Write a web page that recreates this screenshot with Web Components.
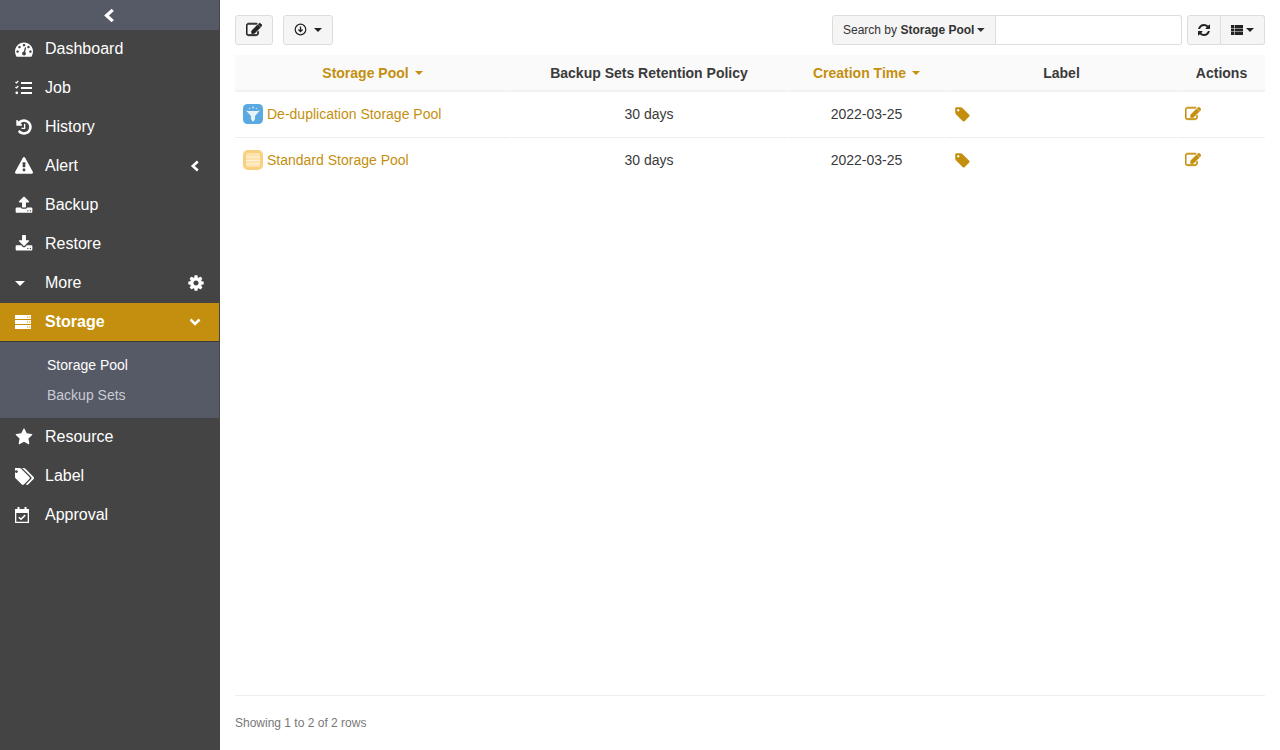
<!DOCTYPE html>
<html>
<head>
<meta charset="utf-8">
<title>Storage Pool</title>
<style>
html, body { height: 100%; margin: 0; }
body { font-family: "Liberation Sans", Arial, sans-serif; color: #333; overflow: hidden; }
app-shell { height: 750px; }
</style>
</head>
<body>
<app-shell>
    <side-nav slot="nav">
        <nav-item icon="dashboard">Dashboard</nav-item>
        <nav-item icon="tasks">Job</nav-item>
        <nav-item icon="history">History</nav-item>
        <nav-item icon="warning" after="left">Alert</nav-item>
        <nav-item icon="upload">Backup</nav-item>
        <nav-item icon="download">Restore</nav-item>
        <nav-item icon="caret" after="cog">More</nav-item>
        <nav-item icon="server" after="down" active>Storage</nav-item>
        <sub-menu>
            <sub-item current>Storage Pool</sub-item>
            <sub-item>Backup Sets</sub-item>
        </sub-menu>
        <nav-item icon="star">Resource</nav-item>
        <nav-item icon="tags">Label</nav-item>
        <nav-item icon="approval">Approval</nav-item>
    </side-nav>
    <pool-page></pool-page>
</app-shell>

<script>
const FA = (d, size, color, bold) => `<svg width="${size}" height="${size}" viewBox="0 0 1792 1792" fill="${color || 'currentColor'}"${bold ? ` stroke="${color || 'currentColor'}" stroke-width="${bold}"` : ''}><path d="${d}"/></svg>`;

const PATHS = {
    // box and pencil without the inner slots, the small size renders them solid
    edit: 'M1408 1058v190q0 119-84.5 203.5t-203.5 84.5h-832q-119 0-203.5-84.5t-84.5-203.5v-832q0-119 84.5-203.5t203.5-84.5h832q63 0 117 25 15 7 18 23 3 17-9 29l-49 49q-14 14-32 8-23-6-45-6h-832q-66 0-113 47t-47 113v832q0 66 47 113t113 47h832q66 0 113-47t47-113v-126q0-13 9-22l64-64q15-15 35-7t20 29zM1312 320l288 288-672 672h-288v-288zM1756 452l-92 92-288-288 92-92q28-28 68-28t68 28l152 152q28 28 28 68t-28 68z',
    tag: 'M576 448q0-53-37.5-90.5t-90.5-37.5-90.5 37.5-37.5 90.5 37.5 90.5 90.5 37.5 90.5-37.5 37.5-90.5zm1067 576q0 53-37 90l-491 492q-39 37-91 37-53 0-90-37l-715-716q-38-37-64.5-101t-26.5-117v-416q0-52 38-90t90-38h416q53 0 117 26.5t102 64.5l715 714q37 39 37 91z',
    tags: 'M384 448q0-53-37.5-90.5t-90.5-37.5-90.5 37.5-37.5 90.5 37.5 90.5 90.5 37.5 90.5-37.5 37.5-90.5zm1067 576q0 53-37 90l-491 492q-39 37-91 37-53 0-90-37l-715-716q-38-37-64.5-101t-26.5-117v-416q0-52 38-90t90-38h416q53 0 117 26.5t102 64.5l715 714q37 39 37 91zm384 0q0 53-37 90l-491 492q-38 37-91 37-36 0-59-14t-53-45l470-470q37-37 37-90 0-52-37-91l-715-714q-38-38-102-64.5t-117-26.5h224q53 0 117 26.5t102 64.5l715 714q37 39 37 91z',
    star: 'M1728 647q0 22-26 48l-363 354 86 500q1 7 1 20 0 21-10.5 35.5t-30.5 14.5q-19 0-40-12l-449-236-449 236q-22 12-40 12-21 0-31.5-14.5t-10.5-35.5q0-6 2-20l86-500-364-354q-25-27-25-48 0-37 56-46l502-73 225-455q19-41 49-41t49 41l225 455 502 73q56 9 56 46z',
    cog: 'M1152 896q0-106-75-181t-181-75-181 75-75 181 75 181 181 75 181-75 75-181zm512-109v222q0 12-8 23t-20 13l-185 28q-19 54-39 91 35 50 107 138 10 12 10 25t-9 23q-27 37-99 108t-94 71q-12 0-26-9l-138-108q-44 23-91 38-16 136-29 186-7 28-36 28h-222q-14 0-24.5-8.5t-11.5-21.5l-28-184q-49-16-90-37l-141 107q-10 9-25 9-14 0-25-11-126-114-165-168-7-10-7-23 0-12 8-23 15-21 51-66.5t54-70.5q-27-50-41-99l-183-27q-13-2-21-12.5t-8-23.5v-222q0-12 8-23t19-13l186-28q14-46 39-92-40-57-107-138-10-12-10-24 0-10 9-23 26-36 98.5-107.5t94.5-71.5q13 0 26 10l138 107q44-23 91-38 16-136 29-186 7-28 36-28h222q14 0 24.5 8.5t11.5 21.5l28 184q49 16 90 37l142-107q9-9 24-9 13 0 25 10 129 119 165 170 7 8 7 22 0 12-8 23-15 21-51 66.5t-54 70.5q26 50 41 98l183 28q13 2 21 12.5t8 23.5z',
    refresh: 'M1639 1056q0 5-1 7-64 268-268 434.5t-478 166.5q-146 0-282.5-55t-243.5-157l-129 129q-19 19-45 19t-45-19-19-45v-448q0-26 19-45t45-19h448q26 0 45 19t19 45-19 45l-137 137q71 66 161 102t187 36q134 0 250-65t186-179q11-17 53-117 8-23 30-23h192q13 0 22.5 9.5t9.5 22.5zm25-800v448q0 26-19 45t-45 19h-448q-26 0-45-19t-19-45 19-45l138-138q-148-137-349-137-134 0-250 65t-186 179q-11 17-53 117-8 23-30 23h-199q-13 0-22.5-9.5t-9.5-22.5v-7q65-268 270-434.5t480-166.5q146 0 284 55.5t245 156.5l130-129q19-19 45-19t45 19 19 45z',
    history: 'M1664 896q0 156-61 298t-164 245-245 164-298 61q-172 0-327-72.5t-264-204.5q-7-10-6.5-22.5t8.5-20.5l137-138q10-9 25-9 16 2 23 12 73 95 179 147t225 52q104 0 198.5-40.5t163.5-109.5 109.5-163.5 40.5-198.5-40.5-198.5-109.5-163.5-163.5-109.5-198.5-40.5q-98 0-188 35.5t-160 101.5l137 138q31 30 14 69-17 40-59 40h-448q-26 0-45-19t-19-45v-448q0-42 40-59 39-17 69 14l130 129q107-101 244.5-156.5t284.5-55.5q156 0 298 61t245 164 164 245 61 298zm-640-288v448q0 14-9 23t-23 9h-320q-14 0-23-9t-9-23v-64q0-14 9-23t23-9h224v-352q0-14 9-23t23-9h64q14 0 23 9t9 23z',
    warning: 'M1024 1375v-190q0-14-9.5-23.5t-22.5-9.5h-192q-13 0-22.5 9.5t-9.5 23.5v190q0 14 9.5 23.5t22.5 9.5h192q13 0 22.5-9.5t9.5-23.5zm-2-374l18-459q0-12-10-19-13-11-24-11h-220q-11 0-24 11-10 7-10 21l17 457q0 10 10 16.5t24 6.5h185q14 0 23.5-6.5t10.5-16.5zm-14-934l768 1408q35 63-2 126-17 29-46.5 46t-63.5 17h-1536q-34 0-63.5-17t-46.5-46q-37-63-2-126l768-1408q17-31 47-49t65-18 65 18 47 49z',
    dashboard: 'M384 1152q0-53-37.5-90.5t-90.5-37.5-90.5 37.5-37.5 90.5 37.5 90.5 90.5 37.5 90.5-37.5 37.5-90.5zm192-448q0-53-37.5-90.5t-90.5-37.5-90.5 37.5-37.5 90.5 37.5 90.5 90.5 37.5 90.5-37.5 37.5-90.5zm428 481l101-382q6-26-7.5-48.5t-38.5-29.5-48 6.5-30 39.5l-101 382q-60 5-107 43.5t-63 98.5q-20 77 20 146t117 89 146-20 89-117q16-60-6-117t-72-91zm660-33q0-53-37.5-90.5t-90.5-37.5-90.5 37.5-37.5 90.5 37.5 90.5 90.5 37.5 90.5-37.5 37.5-90.5zm-640-640q0-53-37.5-90.5t-90.5-37.5-90.5 37.5-37.5 90.5 37.5 90.5 90.5 37.5 90.5-37.5 37.5-90.5zm448 192q0-53-37.5-90.5t-90.5-37.5-90.5 37.5-37.5 90.5 37.5 90.5 90.5 37.5 90.5-37.5 37.5-90.5zm320 448q0 261-141 483-19 29-54 29h-1402q-35 0-54-29-141-221-141-483 0-182 71-348t191-286 286-191 348-71 348 71 286 191 191 286 71 348z',
    upload: 'M1344 1472q0-26-19-45t-45-19-45 19-19 45 19 45 45 19 45-19 19-45zm256 0q0-26-19-45t-45-19-45 19-19 45 19 45 45 19 45-19 19-45zm128-224v320q0 40-28 68t-68 28h-1472q-40 0-68-28t-28-68v-320q0-40 28-68t68-28h427q21 56 70.5 92t110.5 36h256q61 0 110.5-36t70.5-92h427q40 0 68 28t28 68zm-325-648q-17 40-59 40h-256v448q0 26-19 45t-45 19h-256q-26 0-45-19t-19-45v-448h-256q-42 0-59-40-17-39 14-69l448-448q18-19 45-19t45 19l448 448q31 30 14 69z',
    download: 'M1344 1344q0-26-19-45t-45-19-45 19-19 45 19 45 45 19 45-19 19-45zm256 0q0-26-19-45t-45-19-45 19-19 45 19 45 45 19 45-19 19-45zm128-224v320q0 40-28 68t-68 28h-1472q-40 0-68-28t-28-68v-320q0-40 28-68t68-28h465l135 136q58 56 136 56t136-56l136-136h464q40 0 68 28t28 68zm-325-569q17 41-14 70l-448 448q-18 19-45 19t-45-19l-448-448q-31-29-14-70 17-39 59-39h256v-448q0-26 19-45t45-19h256q26 0 45 19t19 45v448h256q42 0 59 39z'
};

// icons that are simple enough to draw by hand
const ICONS = {
    tasks: size => `<svg width="${size}" height="${size}" viewBox="0 0 18 18" fill="currentColor">
        <path d="M0.500 3l1 1 1.800-2" fill="none" stroke="currentColor" stroke-width="1.200"/>
        <path d="M0.500 8l1 1 1.800-2" fill="none" stroke="currentColor" stroke-width="1.200"/>
        <circle cx="1.800" cy="13.800" r="1.400"/>
        <rect x="6" y="3" width="11" height="2"/><rect x="6" y="8" width="11" height="2"/><rect x="6" y="13" width="11" height="2"/></svg>`,
    caret: size => `<svg width="${size}" height="${size}" viewBox="0 0 18 18" fill="currentColor"><path d="M0 7h10l-5 5z"/></svg>`,
    server: size => `<svg width="${size}" height="${size}" viewBox="0 0 18 18" fill="currentColor">
        <path fill-rule="evenodd" d="M0 2h16v4H0zM12 3.500h1v1h-1zM14.200 3.500h1v1h-1zM0 7h16v4H0zM12 8.500h1v1h-1zM14.200 8.500h1v1h-1zM0 12h16v4H0zM12 13.500h1v1h-1zM14.200 13.500h1v1h-1z"/></svg>`,
    approval: size => `<svg width="${size}" height="${size}" viewBox="0 0 18 18" fill="currentColor">
        <path fill-rule="evenodd" d="M0 3h2.500V1h2v2h5V1h2v2H14v14H0zM1.300 7v8.700h11.400V7z"/>
        <path d="M3.800 11.300l2.200 2 4.200-4.200" fill="none" stroke="currentColor" stroke-width="1.500"/></svg>`,
    tags: () => `<svg width="20" height="17" viewBox="128 128 1792 1523" fill="currentColor"><path d="${PATHS.tags}"/></svg>`
};

function icon(name, size) {
    if (ICONS[name]) return ICONS[name](size);
    return FA(PATHS[name], size);
}

const chevron = (dir, size) => {
    const pts = dir == 'left' ? '7.800,1.500 2.800,6 7.800,10.500' : '0.500,3.500 5,8 9.500,3.500';
    return `<svg width="${size || 12}" height="${size || 12}" viewBox="0 0 12 12" fill="none" stroke="currentColor" stroke-width="2.600"><polyline points="${pts}"/></svg>`;
};

class AppShell extends HTMLElement {
    constructor() {
        super();
        this.attachShadow({ mode: 'open' });
        this.shadowRoot.innerHTML = `
            <style>
            :host { display: flex; width: 1280px; }
            .nav { display: block; flex: 0 0 220px; }
            .main { display: block; flex: 1; min-width: 0; }
            </style>
            <div class="nav"><slot name="nav"></slot></div>
            <div class="main"><slot></slot></div>`;
    }
}

class SideNav extends HTMLElement {
    constructor() {
        super();
        this.attachShadow({ mode: 'open' });
        this.shadowRoot.innerHTML = `
            <style>
            :host {
                background: #444;
                border-right: 1px solid #444;
                box-sizing: border-box;
                color: #fff;
                display: block;
                height: 750px;
                width: 220px;
            }
            .collapse {
                align-items: center;
                background: #565966;
                display: flex;
                height: 30px;
                justify-content: center;
                padding-left: 1px;
            }
            </style>
            <div class="collapse">${chevron('left', 15)}</div>
            <slot></slot>`;
    }
}

class NavItem extends HTMLElement {
    constructor() {
        super();
        this.attachShadow({ mode: 'open' });
        let after = this.getAttribute('after');
        let afterHtml = '';
        if (after == 'cog') afterHtml = FA(PATHS.cog, 18);
        else if (after) afterHtml = chevron(after);
        this.shadowRoot.innerHTML = `
            <style>
            :host {
                align-items: center;
                box-sizing: border-box;
                display: flex;
                font-size: 16px;
                height: 39px;
                padding-bottom: 1px;
            }
            :host([active]) {
                background: #c48f0e;
                border-bottom: 1px solid #3a3a3a;
                font-weight: bold;
            }
            .icon { display: flex; margin-left: 15px; width: 30px; }
            .label { flex: 1; }
            .after { display: flex; justify-content: center; margin-right: 14px; width: 18px; }
            </style>
            <span class="icon">${icon(this.getAttribute('icon'), 18)}</span>
            <span class="label"><slot></slot></span>
            <span class="after">${afterHtml}</span>`;
    }
}

class SubMenu extends HTMLElement {
    constructor() {
        super();
        this.attachShadow({ mode: 'open' });
        this.shadowRoot.innerHTML = `
            <style>
            :host {
                background: #565966;
                box-sizing: border-box;
                display: block;
                height: 76px;
                padding-top: 8px;
            }
            </style>
            <slot></slot>`;
    }
}

class SubItem extends HTMLElement {
    constructor() {
        super();
        this.attachShadow({ mode: 'open' });
        this.shadowRoot.innerHTML = `
            <style>
            :host {
                align-items: center;
                color: #c8ccd4;
                display: flex;
                font-size: 14px;
                height: 30px;
                padding-left: 47px;
            }
            :host([current]) { color: #fff; }
            </style>
            <slot></slot>`;
    }
}

class ToolButton extends HTMLElement {
    constructor() {
        super();
        this.attachShadow({ mode: 'open' });
        this.shadowRoot.innerHTML = `
            <style>
            :host {
                align-items: center;
                background: #f5f5f5;
                border: 1px solid #ddd;
                border-radius: 3px;
                box-sizing: border-box;
                color: #333;
                display: inline-flex;
                font-size: 12px;
                gap: 7px;
                height: 30px;
                justify-content: center;
            }
            </style>
            <slot></slot>`;
    }
}

class PoolRow extends HTMLElement {
    constructor() {
        super();
        this.attachShadow({ mode: 'open' });
        this.shadowRoot.innerHTML = `
            <style>
            :host { display: contents; }
            .cell {
                align-items: center;
                border-bottom: 1px solid #eee;
                box-sizing: border-box;
                color: #3a3a3a;
                display: flex;
                font-size: 14px;
                height: 46px;
                margin-right: 1px;
                padding-bottom: 1px;
            }
            :host(:last-child) .cell { border-bottom-color: transparent; }
            .cell:last-child { margin-right: 0; }
            .center { justify-content: center; }
            .name { color: #c48f0e; gap: 4px; padding-left: 8px; }
            .tag { color: #c48f0e; padding-left: 8px; }
            .act { color: #c48f0e; padding-left: 7px; }
            svg { display: block; }
            </style>
            <div class="cell name"><slot name="logo"></slot><span>${this.getAttribute('name')}</span></div>
            <div class="cell center">${this.getAttribute('retention')}</div>
            <div class="cell center">${this.getAttribute('created')}</div>
            <div class="cell tag">${FA(PATHS.tag, 17)}</div>
            <div class="cell act">${FA(PATHS.edit, 16, null, 80)}</div>`;
    }
}

const SORT_CARET = '<svg width="8" height="4" viewBox="0 0 8 4" fill="currentColor"><path d="M0 0h8L4 4z"/></svg>';

class PoolPage extends HTMLElement {
    constructor() {
        super();
        this.attachShadow({ mode: 'open' });
        this.shadowRoot.innerHTML = `
            <style>
            :host {
                box-sizing: border-box;
                display: flex;
                flex-direction: column;
                height: 750px;
                padding: 15px 15px 0;
            }
            .toolbar { display: flex; height: 30px; margin-bottom: 10px; }
            .edit { width: 38px; }
            .export { margin-left: 10px; width: 50px; }
            .raise { margin-bottom: 1px; }
            .spacer { flex: 1; }
            .search { display: flex; height: 30px; }
            .search-by {
                align-items: center;
                background: #f5f5f5;
                border: 1px solid #ddd;
                border-radius: 3px 0 0 3px;
                box-sizing: border-box;
                display: flex;
                font-size: 12px;
                gap: 3px;
                padding: 0 10px;
                white-space: nowrap;
                width: 164px;
            }
            .search-input {
                background: #fff;
                border: 1px solid #ddd;
                border-left: 0;
                border-radius: 0 3px 3px 0;
                box-sizing: border-box;
                width: 186px;
            }
            .group { display: flex; margin-left: 5px; }
            .group tool-button:first-child { border-radius: 3px 0 0 3px; width: 34px; }
            .group tool-button:last-child { border-left: 0; border-radius: 0 3px 3px 0; gap: 3px; width: 44px; }
            .table {
                color: #3a3a3a;
                display: grid;
                grid-template-columns: 276px 277px 158px 232px 87px;
            }
            .th {
                align-items: center;
                background: #fafafa;
                border-bottom: 2px solid #f1f1f1;
                box-shadow: 1px 0 0 #fafafa;
                box-sizing: border-box;
                display: flex;
                font-size: 14px;
                font-weight: bold;
                gap: 6px;
                height: 37px;
                justify-content: center;
                margin-right: 1px;
                padding-top: 1px;
            }
            .th:nth-child(5) { margin-right: 0; box-shadow: none; }
            .sort { color: #c48f0e; }
            .footer {
                border-top: 1px solid #eee;
                box-sizing: border-box;
                color: #777;
                font-size: 12px;
                height: 55px;
                margin-top: auto;
                padding-top: 20px;
            }
            svg { display: block; }
            </style>
            <div class="toolbar">
                <tool-button class="edit"><span class="raise">${FA(PATHS.edit, 16, '#222', 80)}</span></tool-button>
                <tool-button class="export">
                    <svg class="raise" width="13" height="13" viewBox="0 0 14 14" fill="none" stroke="#222"><circle cx="7" cy="7" r="5.700" stroke-width="1.300"/><path d="M7 3.800v5M4.800 7l2.200 2.300L9.200 7" stroke-width="1.400"/></svg>
                    <svg width="8" height="4" viewBox="0 0 8 4" fill="#222"><path d="M0 0h8L4 4z"/></svg>
                </tool-button>
                <div class="spacer"></div>
                <div class="search">
                    <div class="search-by"><span>Search by <b>Storage Pool</b></span><svg width="8" height="4" viewBox="0 0 8 4" fill="#333"><path d="M0 0h8L4 4z"/></svg></div>
                    <div class="search-input"></div>
                </div>
                <div class="group">
                    <tool-button>${FA(PATHS.refresh, 14, '#222')}</tool-button>
                    <tool-button>
                        <svg class="raise" width="12" height="10" viewBox="0 0 12 10" fill="#222"><path d="M0 0h3v3H0zM3.600 0H12v3H3.600zM0 3.500h3v3H0zM3.600 3.500H12v3H3.600zM0 7h3v3H0zM3.600 7H12v3H3.600z"/></svg>
                        <svg width="8" height="4" viewBox="0 0 8 4" fill="#222"><path d="M0 0h8L4 4z"/></svg>
                    </tool-button>
                </div>
            </div>
            <div class="table">
                <div class="th sort">Storage Pool ${SORT_CARET}</div>
                <div class="th">Backup Sets Retention Policy</div>
                <div class="th sort">Creation Time ${SORT_CARET}</div>
                <div class="th">Label</div>
                <div class="th">Actions</div>
                <pool-row name="De-duplication Storage Pool" retention="30 days" created="2022-03-25">
                    <svg slot="logo" width="20" height="20" viewBox="0 0 20 20" style="filter: blur(.3px)"><rect width="20" height="20" rx="4.500" fill="#5aa9e0"/><path d="M3 6.500c3 .8 11 .8 14 0l-5 5.500v3l-1.200 2.300h-1.600L8 15v-3z" fill="#e6f3fb"/><circle cx="10" cy="3.500" r="1" fill="#cfe6f7"/><circle cx="6.500" cy="4.500" r=".7" fill="#cfe6f7"/><circle cx="13.500" cy="4.500" r=".7" fill="#cfe6f7"/></svg>
                </pool-row>
                <pool-row name="Standard Storage Pool" retention="30 days" created="2022-03-25">
                    <svg slot="logo" width="20" height="20" viewBox="0 0 20 20" style="filter: blur(.3px)"><rect width="20" height="20" rx="5" fill="#f9cf80"/><rect x="3" y="3" width="14" height="14" rx="1.500" fill="#fde3ab"/><path d="M3 7h14M3 10.500h14M3 14h14" stroke="#fff4da"/></svg>
                </pool-row>
            </div>
            <div class="footer">Showing 1 to 2 of 2 rows</div>`;
    }
}

customElements.define('app-shell', AppShell);
customElements.define('side-nav', SideNav);
customElements.define('nav-item', NavItem);
customElements.define('sub-menu', SubMenu);
customElements.define('sub-item', SubItem);
customElements.define('tool-button', ToolButton);
customElements.define('pool-row', PoolRow);
customElements.define('pool-page', PoolPage);
</script>
</body>
</html>
